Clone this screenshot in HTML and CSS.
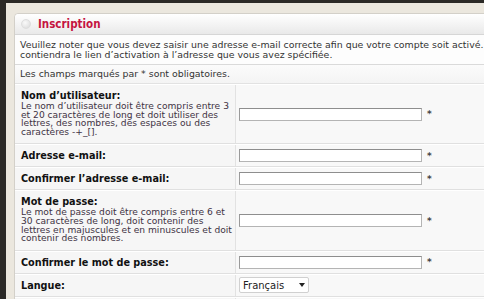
FILE: index.html
```html
<!DOCTYPE html>
<html lang="fr">
<head>
  <meta charset="UTF-8" />
  <title>Inscription</title>
  <link rel="stylesheet" href="styles.css">
</head>
<body>
  <div class="page">
    <div class="panel">
      <div class="panel-head">
        <span class="dot"></span>
        <h2>Inscription</h2>
      </div>
      <p class="intro">Veuillez noter que vous devez saisir une adresse e-mail correcte afin que votre compte soit activé. Vous recevrez un e-mail qui<br>contiendra le lien d’activation à l’adresse que vous avez spécifiée.</p>
      <p class="note">Les champs marqués par * sont obligatoires.</p>

      <div class="form">
        <div class="row">
          <div class="label">
            <strong>Nom d’utilisateur:</strong>
            <span class="hint">Le nom d’utilisateur doit être compris entre 3 et&nbsp;20 caractères de long et doit utiliser des lettres, des nombres, des espaces ou des caractères -+_[].</span>
          </div>
          <div class="field"><input type="text"><span class="req">*</span></div>
        </div>
        <div class="row">
          <div class="label"><strong>Adresse e-mail:</strong></div>
          <div class="field"><input type="text"><span class="req">*</span></div>
        </div>
        <div class="row">
          <div class="label"><strong>Confirmer l’adresse e-mail:</strong></div>
          <div class="field"><input type="text"><span class="req">*</span></div>
        </div>
        <div class="row">
          <div class="label">
            <strong>Mot de passe:</strong>
            <span class="hint">Le mot de passe doit être compris entre 6 et 30 caractères de long, doit contenir des lettres en majuscules et en minuscules et doit contenir des nombres.</span>
          </div>
          <div class="field"><input type="password"><span class="req">*</span></div>
        </div>
        <div class="row">
          <div class="label"><strong>Confirmer le mot de passe:</strong></div>
          <div class="field"><input type="password"><span class="req">*</span></div>
        </div>
        <div class="row">
          <div class="label"><strong>Langue:</strong></div>
          <div class="field">
            <div class="select">Français <span class="arrow"></span></div>
          </div>
        </div>
        <div class="row row-empty">
          <div class="label"></div>
          <div class="field"></div>
        </div>
      </div>
    </div>
  </div>
</body>
</html>
```

FILE: styles.css
```css
* {
  box-sizing: border-box;
  margin: 0;
  padding: 0;
}
body {
  background: #2b2926;
  font-family: 'DejaVu Sans', sans-serif;
  font-size: 9.4px;
  color: #333;
  overflow: hidden;
  height: 299px;
}
.page {
  margin: 3px 0 0 6px;
  background: #ebe7de;
  padding: 10px 0 0 8px;
  height: 296px;
  overflow: hidden;
}
.panel {
  width: 640px;
  background: #fff;
  border: 1px solid #d3d0c9;
  border-radius: 4px 4px 0 0;
}
.panel-head {
  height: 21px;
  display: flex;
  align-items: center;
  gap: 7px;
  padding-left: 6px;
  background: linear-gradient(#ffffff, #e9e9e9);
  border-bottom: 1px solid #d6d6d6;
  border-radius: 4px 4px 0 0;
}
.dot {
  width: 10px;
  height: 10px;
  border-radius: 50%;
  background: radial-gradient(circle at 40% 35%, #fafafa, #d8d8d8);
  border: 1px solid #dedede;
}
.panel-head h2 {
  font-family: 'DejaVu Sans Condensed', 'DejaVu Sans', sans-serif;
  font-size: 11.5px;
  color: #c5143f;
  font-weight: bold;
}
.intro {
  padding: 5px 5px 4px;
  line-height: 10px;
  white-space: nowrap;
  border-bottom: 1px solid #dadada;
  background: #fdfdfd;
}
.note {
  padding: 4px 5px;
  height: 19px;
  line-height: 10px;
  background: linear-gradient(#fbfbfb, #f4f4f4);
  border-bottom: 1px solid #e2e2e2;
}
.row {
  display: grid;
  grid-template-columns: 221px 1fr;
  border-top: 1px solid #fff;
  border-bottom: 1px solid #e0e0e0;
  background: #f6f6f6;
}
.row-empty {
  height: 23px;
}
.label {
  padding: 5px 3px 5px 6px;
  border-right: 1px solid #e2e2e2;
  line-height: 11px;
  color: #111;
}
.label strong {
  display: block;
  font-size: 9.7px;
}
.hint {
  display: block;
  font-size: 9.15px;
  line-height: 8.6px;
  color: #3f3344;
  padding: 1px 0 2px;
}
.field {
  display: flex;
  align-items: center;
  gap: 5px;
  padding-left: 3px;
  background: #f8f8f8;
}
.field input {
  width: 183px;
  height: 13px;
  border: 1px solid #b4b4b4;
  border-top-color: #8e8e8e;
  border-left-color: #9a9a9a;
  background: #fff;
}
.req {
  color: #444;
  font-size: 9px;
  font-weight: bold;
}
.select {
  width: 70px;
  height: 16px;
  border: 1px solid #d0d0d0;
  border-radius: 2px;
  background: #fff;
  font-size: 10px;
  color: #222;
  padding: 0 3px;
  display: flex;
  align-items: center;
  justify-content: space-between;
}
.arrow {
  width: 0;
  height: 0;
  border-left: 3px solid transparent;
  border-right: 3px solid transparent;
  border-top: 4px solid #222;
}
```
